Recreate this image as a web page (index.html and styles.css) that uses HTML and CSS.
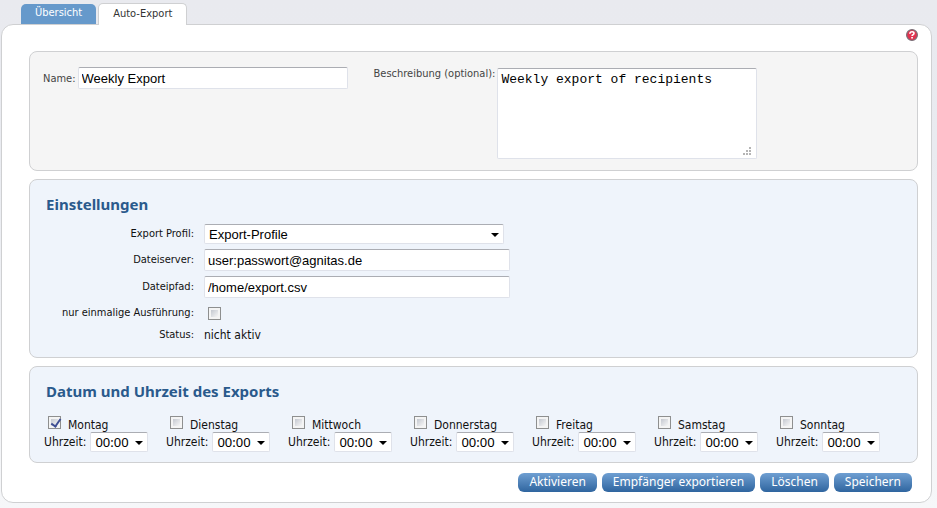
FILE: index.html
```html
<!DOCTYPE html>
<html lang="de">
<head>
<meta charset="utf-8">
<meta name="viewport" content="width=device-width, initial-scale=1">
<title>Auto-Export</title>
<link rel="stylesheet" href="styles.css">
</head>
<body>
<nav class="tabs">
  <a class="tab" href="#uebersicht">Übersicht</a>
  <a class="tab tab-active" href="#auto-export">Auto-Export</a>
</nav>
<main class="page">
  <div class="help-row">
    <a class="help" href="#hilfe" aria-label="Hilfe"><svg viewBox="0 0 12 12" width="12" height="12" aria-hidden="true"><circle cx="6" cy="6" r="5.4" fill="#e2334f" stroke="#777078" stroke-width="1.2"/><path d="M3.9 4.7V4.2Q4.2 2.7 6 2.7Q8 2.7 8 4.3Q8 5.2 7 5.7Q6.1 6.1 6.1 7.1" fill="none" stroke="#fff" stroke-width="1.6"/><path d="M5.2 8h1.7v1.5H5.2z" fill="#fff"/></svg></a>
  </div>
  <form>
    <section class="box box-general">
      <div class="field-name">
        <label for="name">Name:</label>
        <input class="text" id="name" type="text" value="Weekly Export">
      </div>
      <div class="field-desc">
        <label for="desc">Beschreibung (optional):</label>
        <div class="area">
          <textarea id="desc">Weekly export of recipients</textarea>
          <svg class="grip" viewBox="0 0 9 8" width="9" height="8" aria-hidden="true"><path d="M6 0h2v2H6zM3 3h2v2H3zM6 3h2v2H6zM0 6h2v2H0zM3 6h2v2H3zM6 6h2v2H6z" fill="#b4b4b4"/></svg>
        </div>
      </div>
    </section>
    <section class="box box-settings">
      <h2>Einstellungen</h2>
      <div class="settings">
        <label for="profile">Export Profil:</label>
        <span class="select select-wide"><select id="profile"><option>Export-Profile</option></select></span>
        <label for="server">Dateiserver:</label>
        <input class="text" id="server" type="text" value="user:passwort@agnitas.de">
        <label for="path">Dateipfad:</label>
        <input class="text" id="path" type="text" value="/home/export.csv">
        <label for="once">nur einmalige Ausführung:</label>
        <input class="check" id="once" type="checkbox">
        <span class="caption">Status:</span>
        <span class="status">nicht aktiv</span>
      </div>
    </section>
    <section class="box box-schedule">
      <h2>Datum und Uhrzeit des Exports</h2>
      <div class="days">
        <div class="day">
          <div class="day-name"><input class="check" id="d1" type="checkbox" checked><label for="d1">Montag</label></div>
          <div class="day-time"><label for="t1">Uhrzeit:</label><span class="select"><select id="t1"><option>00:00</option></select></span></div>
        </div>
        <div class="day">
          <div class="day-name"><input class="check" id="d2" type="checkbox"><label for="d2">Dienstag</label></div>
          <div class="day-time"><label for="t2">Uhrzeit:</label><span class="select"><select id="t2"><option>00:00</option></select></span></div>
        </div>
        <div class="day">
          <div class="day-name"><input class="check" id="d3" type="checkbox"><label for="d3">Mittwoch</label></div>
          <div class="day-time"><label for="t3">Uhrzeit:</label><span class="select"><select id="t3"><option>00:00</option></select></span></div>
        </div>
        <div class="day">
          <div class="day-name"><input class="check" id="d4" type="checkbox"><label for="d4">Donnerstag</label></div>
          <div class="day-time"><label for="t4">Uhrzeit:</label><span class="select"><select id="t4"><option>00:00</option></select></span></div>
        </div>
        <div class="day">
          <div class="day-name"><input class="check" id="d5" type="checkbox"><label for="d5">Freitag</label></div>
          <div class="day-time"><label for="t5">Uhrzeit:</label><span class="select"><select id="t5"><option>00:00</option></select></span></div>
        </div>
        <div class="day">
          <div class="day-name"><input class="check" id="d6" type="checkbox"><label for="d6">Samstag</label></div>
          <div class="day-time"><label for="t6">Uhrzeit:</label><span class="select"><select id="t6"><option>00:00</option></select></span></div>
        </div>
        <div class="day">
          <div class="day-name"><input class="check" id="d7" type="checkbox"><label for="d7">Sonntag</label></div>
          <div class="day-time"><label for="t7">Uhrzeit:</label><span class="select"><select id="t7"><option>00:00</option></select></span></div>
        </div>
      </div>
    </section>
    <div class="actions">
      <button type="button">Aktivieren</button>
      <button type="button">Empfänger exportieren</button>
      <button type="button">Löschen</button>
      <button type="button">Speichern</button>
    </div>
  </form>
</main>
</body>
</html>
```
FILE: styles.css
```css
* {
  box-sizing: border-box;
}

html {
  min-height: 100%;
  background: linear-gradient(#e9eaef, #e9ebf0 30%, #f6f7f9);
}

body {
  margin: 0;
  padding: 3px 5px 5px 1px;
  font: 11px/14px "DejaVu Sans Condensed", "DejaVu Sans", sans-serif;
  color: #111;
}

.tabs {
  display: flex;
  align-items: flex-end;
  gap: 2px;
  padding-left: 20px;
}

.tab {
  height: 20px;
  padding: 2px 14px;
  border-radius: 5px 5px 0 0;
  background: #6699cb;
  color: #fff;
  text-decoration: none;
}

.tab-active {
  position: relative;
  height: 22px;
  margin-bottom: -1px;
  padding-top: 3px;
  border: 1px solid #cfd0d2;
  border-bottom: 0;
  background: #fff;
  color: #333;
}

.page {
  padding: 4px 13px 10px 27px;
  border: 1px solid #cfd0d2;
  border-radius: 12px;
  background: #fff;
}

.help-row {
  display: flex;
  justify-content: flex-end;
  height: 22px;
}

.help {
  width: 12px;
  height: 12px;
}

.help svg {
  display: block;
}

.box {
  margin-bottom: 8px;
  border: 1px solid #cfd0d2;
  border-radius: 8px;
  background: #eff4fb;
}

.box-general {
  display: flex;
  gap: 26px;
  padding: 15px 13px 12px;
  background: #f5f5f5;
  color: #444;
}

.field-name,
.field-desc {
  display: flex;
  align-items: flex-start;
  gap: 2px;
}

.field-name label {
  padding-top: 5px;
}

.field-name .text {
  width: 270px;
}

.text,
select,
textarea {
  display: block;
  margin: 0;
  border: 1px solid #dfe2ea;
  border-top-color: #abadb3;
  border-radius: 2px;
  background: #fff;
  color: #000;
}

.text {
  width: 306px;
  height: 22px;
  padding: 0 3px;
  font: 13px "Liberation Sans", Arial, sans-serif;
}

.area {
  position: relative;
  padding-top: 1px;
}

textarea {
  width: 260px;
  height: 91px;
  padding: 3px;
  resize: none;
  font: 13px/15px "Liberation Mono", "Courier New", monospace;
}

.grip {
  position: absolute;
  right: 5px;
  bottom: 4px;
}

.box-general {
  padding-bottom: 11px;
}

.box-settings {
  padding: 15px 16px;
}

h2 {
  margin: 0;
  font: bold 15px/18px "Noto Sans", sans-serif;
  color: #2a5a8c;
}

.settings {
  display: grid;
  grid-template-columns: 148px 306px;
  grid-template-rows: 20px 22px 22px 20px 14px;
  align-items: center;
  gap: 5px 10px;
  padding-top: 11px;
}

.settings label,
.caption {
  text-align: right;
}

.settings .check {
  margin-left: 4px;
}

.status,
.days {
  font-size: 12px;
}

.select {
  position: relative;
  display: block;
  width: 58px;
}

.select::after {
  content: "";
  position: absolute;
  top: 9px;
  right: 5px;
  border: 4px solid transparent;
  border-top-color: #000;
  border-bottom: 0;
  pointer-events: none;
}

select {
  appearance: none;
  width: 100%;
  height: 20px;
  padding: 0 4px;
  font: 13px "Noto Sans", sans-serif;
}

.select-wide {
  width: 300px;
}

.select-wide select {
  font: 13px "Liberation Sans", Arial, sans-serif;
}

.check {
  appearance: none;
  width: 13px;
  height: 13px;
  margin: 0;
  border: 1px solid #8e8f8f;
  background: linear-gradient(135deg, #c4c8d0, #f6f6f6) content-box, #f4f4f4;
  padding: 2px;
}

.check:checked::after {
  content: "";
  display: block;
  width: 4px;
  height: 8px;
  margin: -2px 0 0 2px;
  border: solid #3f4f93;
  border-width: 0 2px 2px 0;
  transform: rotate(35deg);
}

.box-schedule {
  padding: 15px 14px 10px;
}

.box-schedule h2 {
  padding-left: 2px;
}

.days {
  display: flex;
  flex-wrap: wrap;
  padding-top: 16px;
}

.day {
  width: 122px;
}

.day-name {
  display: flex;
  gap: 7px;
  height: 16px;
  padding-left: 4px;
}

.day-name label {
  padding-top: 2px;
}

.day-time {
  display: flex;
  align-items: center;
  gap: 4px;
}

.actions {
  display: flex;
  justify-content: flex-end;
  gap: 5px;
  padding: 2px 6px 0 0;
}

button {
  height: 19px;
  padding: 0 11px 2px;
  border: 0;
  border-radius: 6px;
  background: linear-gradient(#6f9fd2, #2f659f);
  color: #fff;
  font: 12px/17px "Noto Sans", sans-serif;
}
```
